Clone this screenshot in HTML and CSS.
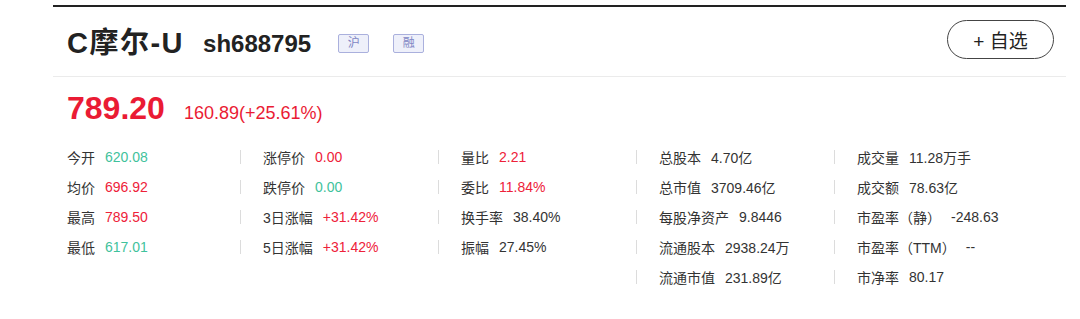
FILE: index.html
```html
<!DOCTYPE html>
<html lang="zh-CN">
<head>
  <meta charset="UTF-8" />
  <meta name="viewport" content="width=device-width, initial-scale=1.0">
  <title>C摩尔-U 行情</title>
  <link rel="stylesheet" href="styles.css">
</head>
<body>
  <div class="quote">
    <div class="header">
      <div class="title-row">
        <h1 class="name">C摩尔-U</h1>
        <span class="code">sh688795</span>
        <span class="badge">沪</span>
        <span class="badge">融</span>
      </div>
      <button class="follow">+ 自选</button>
    </div>

    <div class="price-row">
      <span class="price up">789.20</span>
      <span class="change up">160.89(+25.61%)</span>
    </div>

    <div class="stats">
      <div class="col first">
        <div class="item"><span class="label">今开</span><span class="value down">620.08</span></div>
        <div class="item"><span class="label">均价</span><span class="value up">696.92</span></div>
        <div class="item"><span class="label">最高</span><span class="value up">789.50</span></div>
        <div class="item"><span class="label">最低</span><span class="value down">617.01</span></div>
      </div>
      <div class="col">
        <div class="item"><span class="label">涨停价</span><span class="value up">0.00</span></div>
        <div class="item"><span class="label">跌停价</span><span class="value down">0.00</span></div>
        <div class="item"><span class="label">3日涨幅</span><span class="value up">+31.42%</span></div>
        <div class="item"><span class="label">5日涨幅</span><span class="value up">+31.42%</span></div>
      </div>
      <div class="col">
        <div class="item"><span class="label">量比</span><span class="value up">2.21</span></div>
        <div class="item"><span class="label">委比</span><span class="value up">11.84%</span></div>
        <div class="item"><span class="label">换手率</span><span class="value">38.40%</span></div>
        <div class="item"><span class="label">振幅</span><span class="value">27.45%</span></div>
      </div>
      <div class="col">
        <div class="item"><span class="label">总股本</span><span class="value">4.70亿</span></div>
        <div class="item"><span class="label">总市值</span><span class="value">3709.46亿</span></div>
        <div class="item"><span class="label">每股净资产</span><span class="value">9.8446</span></div>
        <div class="item"><span class="label">流通股本</span><span class="value">2938.24万</span></div>
        <div class="item"><span class="label">流通市值</span><span class="value">231.89亿</span></div>
      </div>
      <div class="col">
        <div class="item"><span class="label">成交量</span><span class="value">11.28万手</span></div>
        <div class="item"><span class="label">成交额</span><span class="value">78.63亿</span></div>
        <div class="item"><span class="label">市盈率（静）</span><span class="value">-248.63</span></div>
        <div class="item"><span class="label">市盈率（TTM）</span><span class="value">--</span></div>
        <div class="item"><span class="label">市净率</span><span class="value">80.17</span></div>
      </div>
    </div>
  </div>
</body>
</html>
```

FILE: styles.css
```css
body {
  margin: 0;
  background: #fff;
  font-family: "Liberation Sans", "Noto Sans CJK SC", sans-serif;
  color: #333;
}

.quote {
  margin: 5px 0 0 53px;
  width: 1013px;
  border-top: 2px solid #222;
}

.header {
  display: flex;
  align-items: center;
  justify-content: space-between;
  padding: 13px 12px 17px 14px;
  border-bottom: 1px solid #ebebeb;
}

.title-row {
  display: flex;
  align-items: center;
  margin-top: 8px;
}

.name {
  margin: 0;
  font-size: 29px;
  line-height: 29px;
  letter-spacing: 1.5px;
  font-weight: bold;
  color: #222;
}

.code {
  margin-left: 19px;
  font-size: 24px;
  font-weight: bold;
  color: #222;
}

.badge {
  box-sizing: border-box;
  width: 31px;
  height: 19px;
  border: 1px solid #aab0dd;
  border-radius: 2px;
  background: #eef0fa;
  color: #7e86c4;
  font-size: 12px;
  line-height: 17px;
  text-align: center;
}

.badge + .badge {
  margin-left: 24px;
}

.code + .badge {
  margin-left: 27px;
}

.follow {
  box-sizing: border-box;
  width: 107px;
  height: 39px;
  border: 1.5px solid #444;
  border-radius: 20px;
  background: #fff;
  color: #222;
  font-family: inherit;
  font-size: 19px;
  cursor: pointer;
}

.price-row {
  display: flex;
  align-items: baseline;
  padding-left: 14px;
  margin-top: 15px;
}

.price {
  font-size: 32px;
  line-height: 32px;
  font-weight: bold;
}

.change {
  margin-left: 19px;
  font-size: 18px;
}

.up {
  color: #ea1b34;
}

.down {
  color: #3fc29c;
}

.stats {
  display: flex;
  padding-left: 14px;
  margin-top: 18px;
}

.col {
  width: 198px;
}

.col.first {
  width: 173px;
}

.item {
  display: flex;
  align-items: center;
  height: 30px;
  font-size: 14px;
}

.col:not(.first) .item::before {
  content: "";
  width: 1px;
  height: 14px;
  margin-right: 22px;
  background: #dcdcdc;
}

.label {
  color: #333;
  margin-right: 10px;
}

.value {
  color: #333;
}

.value.up {
  color: #ee2139;
}

.value.down {
  color: #3fc29c;
}
```
